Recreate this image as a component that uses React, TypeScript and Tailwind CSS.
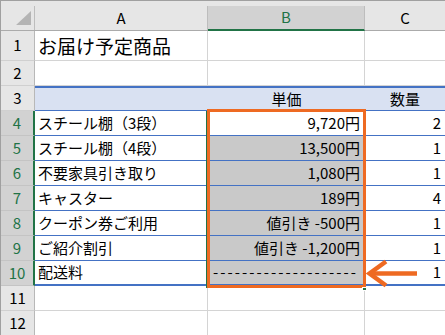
import React from "react";

type Row = {
  n: number;
  a?: string;
  b?: string;
  c?: string;
  h: string;
};

const font = { fontFamily: '"Noto Sans CJK JP", "Noto Sans", sans-serif' };

const rows: Row[] = [
  { n: 4, a: "スチール棚（3段）", b: "9,720円", c: "2", h: "h-[25px]" },
  { n: 5, a: "スチール棚（4段）", b: "13,500円", c: "1", h: "h-[25px]" },
  { n: 6, a: "不要家具引き取り", b: "1,080円", c: "1", h: "h-[25px]" },
  { n: 7, a: "キャスター", b: "189円", c: "4", h: "h-[25px]" },
  { n: 8, a: "クーポン券ご利用", b: "値引き -500円", c: "1", h: "h-[25px]" },
  { n: 9, a: "ご紹介割引", b: "値引き -1,200円", c: "1", h: "h-[25px]" },
  { n: 10, a: "配送料", b: "--------------------", c: "1", h: "h-[25px]" },
];

function PlainRow({ n, h, children }: { n: number; h: string; children?: React.ReactNode }) {
  return (
    <>
      <div className={`${h} flex items-center justify-center bg-[#e6e6e6] border-r border-r-[#b8b8b8] border-b border-b-[#d0d0d0] text-[15px] text-black`}>
        {n}
      </div>
      <div className={`${h} flex items-center pl-[3px] border-r border-b border-[#d4d4d4] text-black`}>
        {children}
      </div>
      <div className={`${h} border-r border-b border-[#d4d4d4]`} />
      <div className={`${h} border-b border-[#d4d4d4]`} />
    </>
  );
}

export default function App() {
  return (
    <div
      className="relative w-[445px] h-[335px] overflow-hidden bg-white border-t border-l border-[#a0a0a0]"
      style={font}
    >
      <div className="grid grid-cols-[34px_173px_157px_80px]">
        {/* column headers */}
        <div className="h-[30px] pt-[5px] bg-[#e6e6e6] border-b border-[#ababab]">
          <div className="h-full border-r border-[#bdbdbd] relative">
            <svg width="34" height="24" className="absolute left-0 top-[-5px]">
              <polygon points="30,10 30,25 14,25" fill="#b4b4b4" />
            </svg>
          </div>
        </div>
        <div className="h-[30px] pt-[5px] bg-[#e6e6e6] border-b border-[#ababab]">
          <div className="h-full flex items-center justify-center border-r border-[#bdbdbd] text-[15px] text-black">
            A
          </div>
        </div>
        <div className="h-[30px] pt-[5px] bg-[#e6e6e6]">
          <div className="h-full flex items-center justify-center bg-[#d2d2d2] border-r border-[#bdbdbd] border-b-2 border-b-[#217346] text-[15px] text-[#217346]">
            B
          </div>
        </div>
        <div className="h-[30px] pt-[5px] bg-[#e6e6e6] border-b border-[#ababab]">
          <div className="h-full flex items-center justify-center text-[15px] text-black">C</div>
        </div>

        {/* title row */}
        <PlainRow n={1} h="h-[30px]">
          <span className="text-[19px] leading-none whitespace-nowrap">お届け予定商品</span>
        </PlainRow>
        <PlainRow n={2} h="h-[25px]" />

        {/* table header row */}
        <div className="h-[25px] flex items-center justify-center bg-[#e6e6e6] border-r border-r-[#b8b8b8] border-b border-b-[#d0d0d0] text-[15px] text-black">
          3
        </div>
        <div className="h-[25px] bg-[#d9e1f2] border-t-2 border-b border-[#4472c4]" />
        <div className="h-[25px] flex items-center justify-center bg-[#d9e1f2] border-t-2 border-b border-[#4472c4] text-[15px] text-black">
          単価
        </div>
        <div className="h-[25px] flex items-center justify-center bg-[#d9e1f2] border-t-2 border-b border-[#4472c4] text-[15px] text-black">
          数量
        </div>

        {/* table body */}
        {rows.map((r) => {
          const last = r.n === 10;
          const line = last ? "border-b-2" : "border-b";
          return (
            <React.Fragment key={r.n}>
              <div className={`${r.h} flex items-center justify-center bg-[#d2d2d2] border-r-2 border-r-[#217346] border-b border-b-[#c4c4c4] text-[15px] text-[#217346]`}>
                {r.n}
              </div>
              <div className={`${r.h} flex items-center pl-[3px] ${line} border-[#4472c4] text-[15px] text-black whitespace-nowrap`}>
                {r.a}
              </div>
              <div
                className={`${r.h} flex items-center ${last ? "justify-start pl-[5px] tracking-[2.05px]" : "justify-end pr-[5px]"} ${r.n === 4 ? "bg-white" : "bg-[#c9c9c9]"} ${line} border-[#4472c4] text-[15px] text-black whitespace-nowrap overflow-hidden`}
              >
                {r.b}
              </div>
              <div className={`${r.h} flex items-center justify-end pr-[4px] ${line} border-[#4472c4] text-[15px] text-black`}>
                {r.c}
              </div>
            </React.Fragment>
          );
        })}

        <PlainRow n={11} h="h-[25px]" />
        <PlainRow n={12} h="h-[25px]" />
      </div>

      {/* selection outline and fill handle */}
      <div className="absolute left-[205px] top-[110px] w-[1px] h-[177px] bg-[#217346]" />
      <div className="absolute left-[206px] top-[108px] w-[159px] h-[179px] border-[3px] border-[#ee6a22]" />
      <div className="absolute left-[361px] top-[286px] w-[5px] h-[4px] bg-[#217346] border border-white" />

      {/* pointer arrow */}
      <svg className="absolute left-0 top-0 pointer-events-none" width="444" height="334">
        <polyline points="385,260.5 368.5,272.5 385,284.5" fill="none" stroke="#ee6a22" strokeWidth="4.5" />
        <line x1="370" y1="272.5" x2="416" y2="272.5" stroke="#ee6a22" strokeWidth="4.5" />
      </svg>
    </div>
  );
}
